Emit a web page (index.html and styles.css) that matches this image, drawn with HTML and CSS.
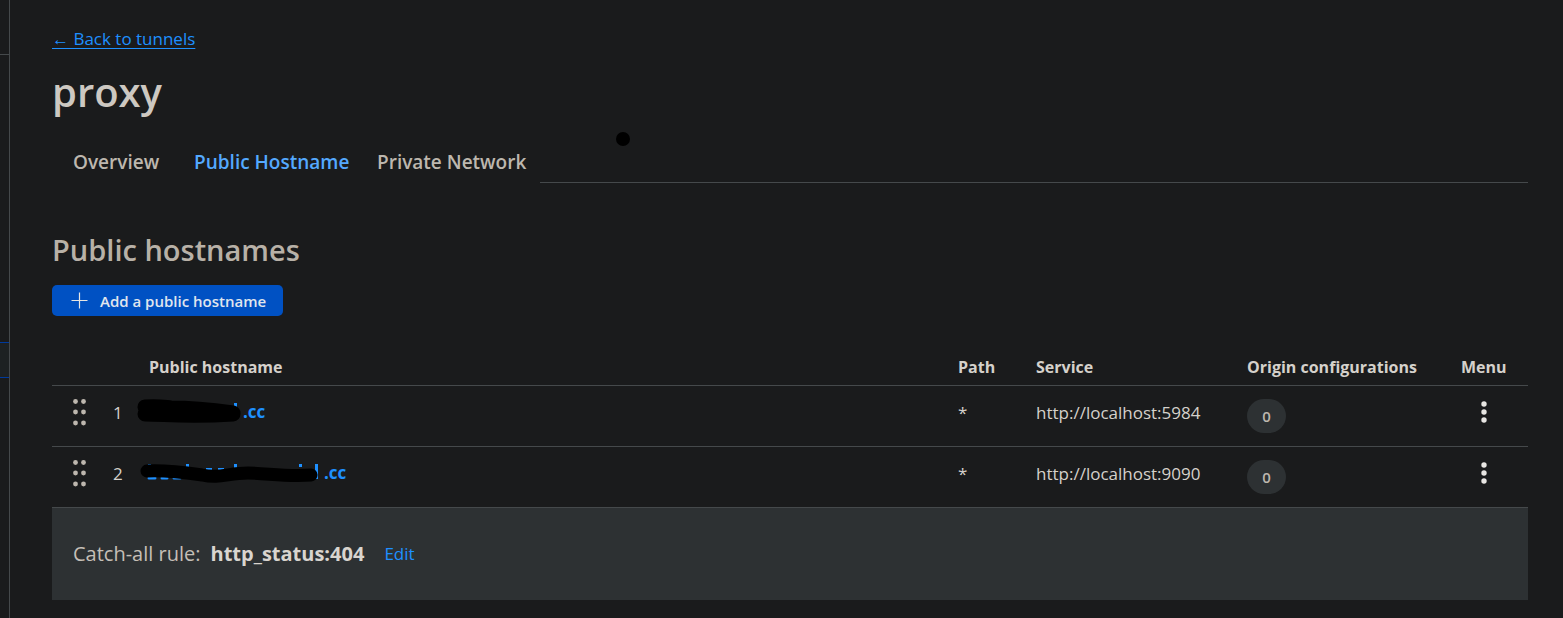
FILE: index.html
```html
<!DOCTYPE html>
<html lang="en">
<head>
<meta charset="utf-8">
<title>proxy</title>
<link rel="stylesheet" href="styles.css">
</head>
<body>
<div class="app">
  <aside class="rail">
    <div class="rail-top"></div>
    <div class="rail-space"></div>
    <div class="rail-active"></div>
  </aside>
  <main class="main">
    <a class="back" href="#"><span class="arrow">←</span> Back to tunnels</a>
    <h1 class="title">proxy</h1>
    <nav class="tabs">
      <a class="tab" href="#">Overview</a>
      <a class="tab tab-active" href="#" aria-current="page">Public Hostname</a>
      <a class="tab tab-last" href="#">Private Network</a>
      <span class="tabs-line"></span>
      <span class="ink-dot"></span>
    </nav>
    <h2 class="subtitle">Public hostnames</h2>
    <button class="add" type="button">
      <svg width="17" height="17" viewBox="0 0 17 17" aria-hidden="true"><path d="M8.5 0.5v16M0.5 8.5h16" stroke="#e8e6e3" stroke-width="1.2" fill="none"/></svg>
      Add a public hostname
    </button>
    <table class="hosts">
      <colgroup><col class="c-drag"><col class="c-num"><col><col class="c-path"><col class="c-service"><col class="c-origin"><col class="c-menu"></colgroup>
      <thead>
        <tr><th></th><th></th><th>Public hostname</th><th>Path</th><th>Service</th><th>Origin configurations</th><th>Menu</th></tr>
      </thead>
      <tbody>
        <tr>
          <td><svg class="drag" width="14" height="28" viewBox="0 0 14 28" fill="#bdb7ae" aria-hidden="true"><circle cx="3.500" cy="3.500" r="2.400"/><circle cx="11.500" cy="3.500" r="2.400"/><circle cx="3.500" cy="14" r="2.400"/><circle cx="11.500" cy="14" r="2.400"/><circle cx="3.500" cy="25" r="2.400"/><circle cx="11.500" cy="25" r="2.400"/></svg></td>
          <td>1</td>
          <td><a class="host" href="#"><svg class="ink" width="107" height="26" viewBox="0 0 107 26" aria-hidden="true"><path d="M81 5h3v4h-3zM98 4h3v10h-3z" fill="#1e90ff"/><path d="M9 8C22 7 26 8 35 9C55 9 75 11 97 14M9 15C30 15 50 18 97 15" stroke="#000" stroke-width="15" stroke-linecap="round" fill="none"/></svg>.cc</a></td>
          <td>*</td>
          <td>http://localhost:5984</td>
          <td><span class="pill">0</span></td>
          <td><button class="menu" type="button" aria-label="Menu"><svg width="6" height="22" viewBox="0 0 6 22" fill="#e8e6e3"><circle cx="3" cy="3" r="2.700"/><circle cx="3" cy="11" r="2.700"/><circle cx="3" cy="19" r="2.700"/></svg></button></td>
        </tr>
        <tr>
          <td><svg class="drag" width="14" height="28" viewBox="0 0 14 28" fill="#bdb7ae" aria-hidden="true"><circle cx="3.500" cy="3.500" r="2.400"/><circle cx="11.500" cy="3.500" r="2.400"/><circle cx="3.500" cy="14" r="2.400"/><circle cx="11.500" cy="14" r="2.400"/><circle cx="3.500" cy="25" r="2.400"/><circle cx="11.500" cy="25" r="2.400"/></svg></td>
          <td>2</td>
          <td><a class="host" href="#"><svg class="ink" width="188" height="26" viewBox="0 0 188 26" aria-hidden="true"><path d="M12 4h3v14h-3zM50 4h3v4h-3zM98 4h3v9h-3zM163 4h3v3h-3zM179 4h3v15h-3zM70 8h6v4h-6zM82 8h6v4h-6z" fill="#1e90ff"/><path d="M13 18h6M26 18h5M38 18h6" stroke="#1e90ff" stroke-width="3" stroke-linecap="round"/><path d="M11 11C32 10 52 13 66 15C84 19 92 13 112 13C130 13 150 17 175 15" stroke="#000" stroke-width="13" stroke-linecap="round" stroke-linejoin="round" fill="none"/></svg>.cc</a></td>
          <td>*</td>
          <td>http://localhost:9090</td>
          <td><span class="pill">0</span></td>
          <td><button class="menu" type="button" aria-label="Menu"><svg width="6" height="22" viewBox="0 0 6 22" fill="#e8e6e3"><circle cx="3" cy="3" r="2.700"/><circle cx="3" cy="11" r="2.700"/><circle cx="3" cy="19" r="2.700"/></svg></button></td>
        </tr>
      </tbody>
    </table>
    <div class="catch">
      <span>Catch-all rule:</span>
      <strong>http_status:404</strong>
      <a class="edit" href="#">Edit</a>
    </div>
  </main>
</div>
</body>
</html>
```
FILE: styles.css
```css
* { box-sizing: border-box; }
body {
  margin: 0;
  background: #1a1b1c;
  color: #d5d1cb;
  font-family: "Open Sans", "Noto Sans", sans-serif;
  font-size: 17px;
  line-height: 24px;
}
a { color: #1e90ff; text-decoration: none; }
.app { display: flex; min-height: 100vh; }
.rail {
  width: 10px;
  flex: none;
  display: flex;
  flex-direction: column;
  border-right: 1px solid #45494b;
}
.rail-top { height: 55px; border-bottom: 1px solid #45494b; }
.rail-space { height: 287px; }
.rail-active {
  height: 36px;
  background: #1d2122;
  border-top: 1px solid #003a9c;
  border-bottom: 1px solid #003a9c;
}
.main {
  flex: 1;
  min-width: 0;
  display: flex;
  flex-direction: column;
  align-items: flex-start;
  padding: 27px 35px 18px 42px;
}
.back { text-decoration: underline; text-underline-offset: 3px; }
.title {
  margin: 13px 0 0;
  font-size: 40px;
  line-height: 56px;
  font-weight: 600;
  color: #cdc8c1;
}
.tabs {
  position: relative;
  align-self: stretch;
  display: flex;
  align-items: flex-end;
  height: 63px;
  font-size: 19px;
  font-weight: 600;
}
.tab { width: 121px; padding: 0 0 9px 21px; color: #bdb7ae; white-space: nowrap; }
.tab-active { width: 183px; color: #54a9ff; }
.tab-last { width: 184px; }
.tabs-line { flex: 1; border-bottom: 1px solid #45494b; }
.ink-dot {
  position: absolute;
  left: 564px;
  top: 12px;
  width: 14px;
  height: 14px;
  border-radius: 50%;
  background: #000;
}
.subtitle {
  margin: 47px 0 0;
  font-size: 29px;
  line-height: 40px;
  font-weight: 600;
  color: #b8b1a7;
}
.add {
  display: flex;
  align-items: center;
  gap: 12px;
  height: 31px;
  margin-top: 15px;
  padding: 0 17px 0 19px;
  border: 0;
  border-radius: 5px;
  background: #0051c3;
  color: #e0e6ee;
  font: 600 15px/24px "Open Sans", sans-serif;
}
.hosts {
  width: 100%;
  margin-top: 32px;
  border-collapse: collapse;
  table-layout: fixed;
}
.c-drag { width: 47px; }
.c-num { width: 36px; }
.c-path { width: 78px; }
.c-service { width: 211px; }
.c-origin { width: 214px; }
.c-menu { width: 81px; }
th {
  height: 37px;
  padding: 2px 0 0 14px;
  font-size: 16px;
  font-weight: 700;
  text-align: left;
  white-space: nowrap;
}
td {
  height: 61px;
  padding: 0 0 6px 14px;
  border-top: 1px solid #45494b;
}
td:first-child { padding: 0 0 8px 20px; }
td:nth-child(3), td:last-child { padding-bottom: 8px; }
td:nth-child(6) { padding-bottom: 0; }
.drag, .pill, .menu, .menu svg { display: block; }
.host { display: flex; align-items: center; margin-left: -14px; padding-left: 1px; font-weight: 700; }
.ink { flex: none; }
.pill {
  width: 39px;
  height: 34px;
  border-radius: 17px;
  background: #2d3133;
  color: #bdb7ae;
  font-size: 15px;
  font-weight: 600;
  line-height: 34px;
  text-align: center;
}
.menu { margin-left: 20px; padding: 0; border: 0; background: none; }
.catch {
  align-self: stretch;
  display: flex;
  align-items: center;
  height: 93px;
  padding: 0 21px;
  border-top: 1px solid #45494b;
  background: #2d3133;
  color: #c5bfb7;
  font-size: 20px;
}
.catch strong { margin-left: 10px; color: #d9d5cf; }
.edit { margin-left: 20px; font-size: 17px; }
```
